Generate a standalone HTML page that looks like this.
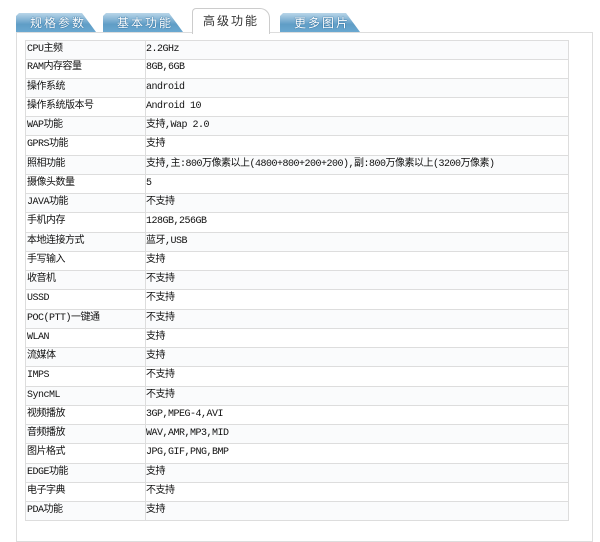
<!DOCTYPE html><html><head><meta charset="utf-8"><style>
body{margin:0;width:600px;height:522px;background:#fff;overflow:hidden;position:relative;font-family:"Liberation Mono","Noto Sans CJK SC",monospace;}
.tab{position:absolute;top:13px;height:19px;width:80px;background:linear-gradient(#b9d6e8,#5f9dc6 60%,#6aa8d0);clip-path:polygon(0 3px,3px 0,66px 0,80px 100%,0 100%);color:#fff;font:12px "Noto Sans CJK SC",sans-serif;line-height:20px;padding-left:14px;box-sizing:border-box;letter-spacing:2px;text-shadow:0 0 1px #2c6a98,0 0 1px #2c6a98;}
.act{position:absolute;left:192px;top:8px;width:78px;height:26px;background:#fff;border:1px solid #ccc;border-bottom:none;border-radius:4px 10px 0 0;font:12px "Noto Sans CJK SC",sans-serif;color:#333;line-height:24px;padding-left:10px;box-sizing:border-box;letter-spacing:2px}
.box{position:absolute;left:16px;top:32px;width:577px;height:510px;border:1px solid #ddd;box-sizing:border-box}
.r{position:absolute;left:25px;width:544px;height:19px;border:1px solid #ddd;border-top:none;box-sizing:border-box;font-size:10px;letter-spacing:-0.5px;color:#111;line-height:18px}
.r span{position:absolute;left:0;top:0;bottom:0;width:118px;border-right:1px solid #ddd;padding-left:1px}
.r b{font-weight:normal;position:absolute;left:119px;padding-left:1px}
</style></head><body>
<div class="tab" style="left:16px">规格参数</div>
<div class="tab" style="left:103px">基本功能</div>
<div class="tab" style="left:280px">更多图片</div>
<div class="box"></div>
<div class="act">高级功能</div>
<div id="t"></div>
<script>
var d=[["CPU主频","2.2GHz"],["RAM内存容量","8GB,6GB"],["操作系统","android"],["操作系统版本号","Android 10"],["WAP功能","支持,Wap 2.0"],["GPRS功能","支持"],["照相功能","支持,主:800万像素以上(4800+800+200+200),副:800万像素以上(3200万像素)"],["摄像头数量","5"],["JAVA功能","不支持"],["手机内存","128GB,256GB"],["本地连接方式","蓝牙,USB"],["手写输入","支持"],["收音机","不支持"],["USSD","不支持"],["POC(PTT)一键通","不支持"],["WLAN","支持"],["流媒体","支持"],["IMPS","不支持"],["SyncML","不支持"],["视频播放","3GP,MPEG-4,AVI"],["音频播放","WAV,AMR,MP3,MID"],["图片格式","JPG,GIF,PNG,BMP"],["EDGE功能","支持"],["电子字典","不支持"],["PDA功能","支持"]];
var h='';d.forEach(function(r,i){var y=40+i*19.25;h+='<div class="r" style="top:'+y+'px;height:'+(i==0?20:19.25)+'px;'+(i==0?'border-top:1px solid #ddd;':'')+(i%2==0?'background:#fafbfc':'')+'"><span>'+r[0]+'</span><b>'+r[1]+'</b></div>'});
document.getElementById('t').innerHTML=h;
</script>
</body></html>
